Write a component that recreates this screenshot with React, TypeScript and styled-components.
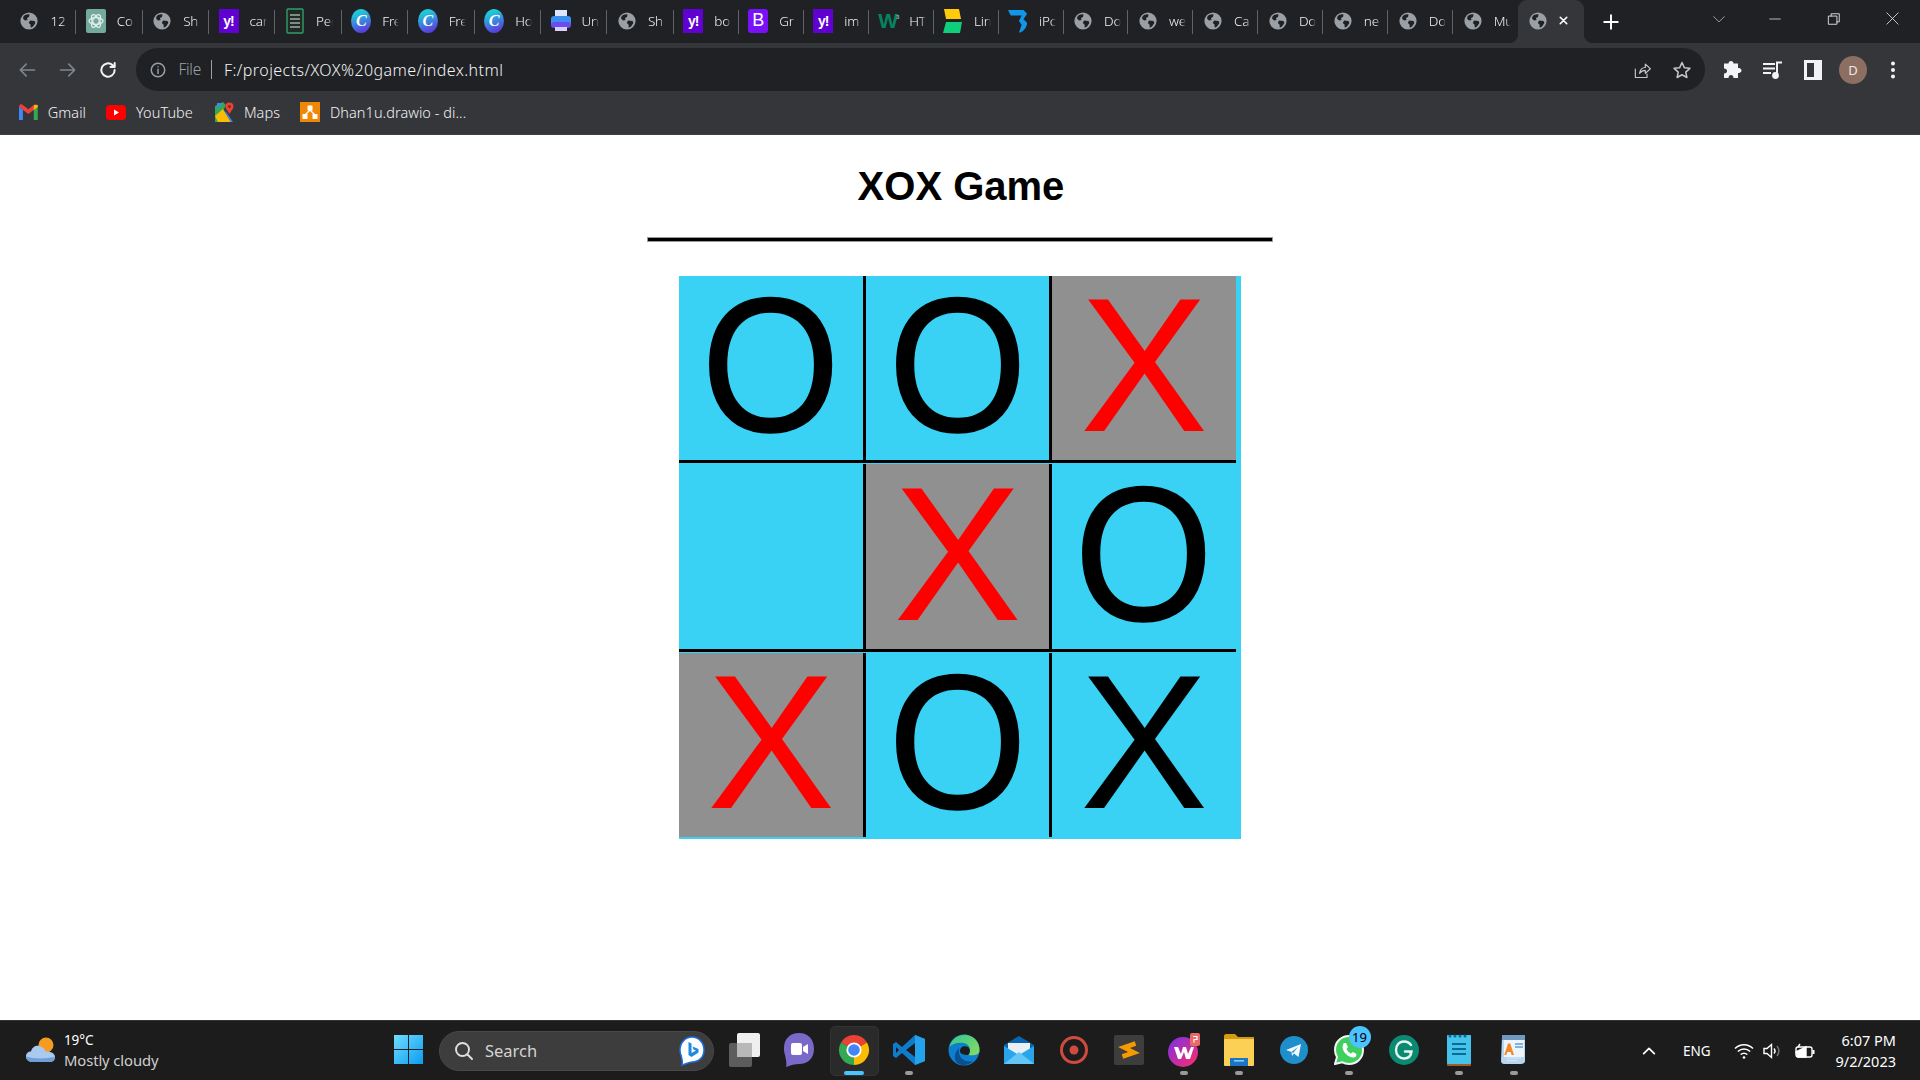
import React from "react";
import styled, { createGlobalStyle } from "styled-components";

const GlobalStyle = createGlobalStyle`
  html, body { margin: 0; padding: 0; height: 100%; background: #fff; overflow: hidden; }
  #root { height: 100%; }
`;

const UI = `"Noto Sans", "Open Sans", "Liberation Sans", sans-serif`;

const Page = styled.div`
  width: 1920px;
  height: 1080px;
  display: flex;
  flex-direction: column;
  font-family: ${UI};
  overflow: hidden;
`;

/* ---------- Tab strip ---------- */
const TabStrip = styled.div`
  height: 43px;
  flex: none;
  background: #202124;
  display: flex;
  padding-left: 9.9px;
`;
const Tab = styled.div<{ $w: number }>`
  width: ${(p) => p.$w}px;
  height: 43px;
  flex: none;
  display: flex;
  align-items: center;
  padding: 0 0 2px 9.5px;
  box-sizing: border-box;
  position: relative;
  gap: 11px;
`;
const FavSlot = styled.span`
  width: 20px;
  flex: none;
  display: flex;
  align-items: center;
  justify-content: center;
`;
const TabDivider = styled.span`
  position: absolute;
  right: 0;
  top: 10px;
  width: 1px;
  height: 24px;
  background: #5f6368;
`;
const TabTitle = styled.span`
  width: 17px;
  overflow: hidden;
  white-space: nowrap;
  font-size: 13.5px;
  font-weight: 300;
  letter-spacing: -0.2px;
  color: #f1f3f4;
  -webkit-mask-image: linear-gradient(90deg, #000 70%, transparent);
  mask-image: linear-gradient(90deg, #000 70%, transparent);
`;
const ActiveTab = styled(Tab)`
  background: #35363a;
  border-radius: 9px 9px 0 0;
  gap: 9px;
  &::before, &::after {
    content: "";
    position: absolute;
    bottom: 0;
    width: 9px;
    height: 9px;
  }
  &::before { left: -9px; background: radial-gradient(circle at 0 0, transparent 9px, #35363a 9.5px); }
  &::after { right: -9px; background: radial-gradient(circle at 100% 0, transparent 9px, #35363a 9.5px); }
`;
const NewTabButton = styled.div`
  width: 32px;
  height: 43px;
  margin-left: 11px;
  display: flex;
  align-items: center;
  justify-content: center;
  flex: none;
`;
const WindowControls = styled.div`
  margin-left: auto;
  display: flex;
  height: 37px;
`;
const WindowButton = styled.div<{ $w?: number }>`
  width: ${(p) => p.$w ?? 58}px;
  display: flex;
  align-items: center;
  justify-content: center;
`;

/* ---------- Toolbar ---------- */
const Toolbar = styled.div`
  height: 48px;
  flex: none;
  background: #35363a;
  display: flex;
  align-items: flex-end;
  padding: 0 7px;
  box-sizing: border-box;
`;
const ToolbarSide = styled.div`
  height: 43px;
  display: flex;
  align-items: center;
  flex: none;
`;
const NavButton = styled.div`
  width: 40.5px;
  height: 40px;
  display: flex;
  align-items: center;
  justify-content: center;
`;
const Omnibox = styled.div`
  flex: 1;
  height: 43px;
  margin: 0 8px 0 7px;
  border-radius: 22px;
  background: #202124;
  display: flex;
  align-items: center;
  padding: 0 3px 0 13px;
`;
const SiteChip = styled.span`
  font-size: 15.500px;
  font-weight: 300;
  color: #9aa0a6;
  margin-left: 12px;
  padding-right: 10px;
  border-right: 1px solid #9aa0a6;
  line-height: 19px;
  letter-spacing: -0.3px;
`;
const UrlText = styled.span`
  margin-left: 12px;
  font-size: 16px;
  font-weight: 300;
  color: #f1f3f4;
  letter-spacing: 0.44px;
`;
const OmniActions = styled.div`
  margin-left: auto;
  display: flex;
`;
const ActionButton = styled.div`
  width: 40px;
  height: 40px;
  display: flex;
  align-items: center;
  justify-content: center;
`;
const Avatar = styled.div`
  width: 28px;
  height: 28px;
  border-radius: 50%;
  background: #8d6e63;
  color: #f1e6e1;
  font-size: 13px;
  display: flex;
  align-items: center;
  justify-content: center;
`;

/* ---------- Bookmarks ---------- */
const BookmarksBar = styled.div`
  height: 44px;
  flex: none;
  background: #35363a;
  display: flex;
  align-items: center;
  padding: 0 0 1px 19px;
  box-sizing: border-box;
  gap: 20px;
  border-bottom: 1px solid #3f4044;
`;
const Bookmark = styled.div<{ $w: number }>`
  display: flex;
  align-items: center;
  gap: 10px;
  width: ${(p) => p.$w}px;
  font-size: 14.500px;
  font-weight: 300;
  letter-spacing: 0.05px;
  color: #f1f3f4;
  white-space: nowrap;
`;

/* ---------- Game ---------- */
const Main = styled.main`
  flex: 1;
  background: #fff;
  display: flex;
  flex-direction: column;
  align-items: center;
  font-family: "Liberation Sans", Arial, sans-serif;
`;
const Title = styled.h1`
  margin: 29px 0 28px;
  padding-left: 2px;
  font-size: 40px;
  line-height: 45px;
  font-weight: 700;
  color: #000;
`;
const Rule = styled.hr`
  width: 626px;
  height: 5px;
  margin: 0 0 34px;
  box-sizing: border-box;
  border: 1px solid #9a9a9a;
  background: #000;
`;
const Board = styled.div`
  width: 562px;
  height: 563px;
  background: #39d2f4;
  display: grid;
  grid-template-columns: 187px 186px 184px;
  grid-template-rows: 187px 188px 184px;
  row-gap: 1px;
  align-content: start;
  justify-content: start;
`;
const Cell = styled.div<{ $hit?: boolean; $red?: boolean; $col: number; $row: number }>`
  box-sizing: border-box;
  background: ${(p) => (p.$hit ? "#909090" : "transparent")};
  color: ${(p) => (p.$red ? "#ff0000" : "#000")};
  border-right: ${(p) => (p.$col < 2 ? "3px solid #000" : "0")};
  border-bottom: ${(p) => (p.$row < 2 ? "3px solid #000" : "0")};
  font-size: 192px;
  line-height: 1;
  padding-bottom: 6px;
  display: flex;
  align-items: center;
  justify-content: center;
  overflow: hidden;
`;
const Ring = styled.span`
  display: inline-block;
  transform: scaleX(0.93);
  -webkit-text-stroke: 1.4px #000;
`;

/* ---------- Taskbar ---------- */
const Taskbar = styled.div`
  height: 60px;
  flex: none;
  box-sizing: border-box;
  background: #1c1c1c;
  border-top: 1px solid #333;
  display: flex;
  align-items: center;
  font-family: ${UI};
  color: #fff;
`;
const Weather = styled.div`
  width: 380.5px;
  flex: none;
  box-sizing: border-box;
  padding: 0 0 2px 26px;
  display: flex;
  align-items: center;
  gap: 8px;
`;
const WeatherText = styled.div`
  font-size: 14.800px;
  line-height: 20px;
  color: #cfcfcf;
  letter-spacing: -0.1px;
`;
const WeatherTemp = styled.div`
  font-size: 13.500px;
  color: #fff;
`;
const TaskIcon = styled.div<{ $active?: boolean }>`
  width: 55px;
  height: 50px;
  flex: none;
  box-sizing: border-box;
  padding-bottom: 2px;
  position: relative;
  display: flex;
  align-items: center;
  justify-content: center;
  &::before {
    content: "";
    display: ${(p) => (p.$active ? "block" : "none")};
    position: absolute;
    inset: 0 3px;
    border-radius: 5px;
    background: #2a2a2a;
    border: 1px solid #333;
  }
  & > svg { position: relative; }
`;
const RunDot = styled.span<{ $active?: boolean }>`
  position: absolute;
  bottom: 1px;
  left: 50%;
  transform: translateX(-50%);
  width: ${(p) => (p.$active ? 20 : 8)}px;
  height: 4px;
  border-radius: 2px;
  background: ${(p) => (p.$active ? "#4cc2ff" : "#9a9a9a")};
`;
const Badge = styled.span`
  position: absolute;
  top: 0;
  right: 6px;
  width: 22px;
  height: 22px;
  border-radius: 50%;
  background: #4cc2ff;
  color: #000;
  font-size: 13px;
  display: flex;
  align-items: center;
  justify-content: center;
`;
const SearchBox = styled.div`
  width: 275px;
  height: 40px;
  flex: none;
  margin: 0 2.5px 0 3.5px;
  box-sizing: border-box;
  border-radius: 20px;
  background: #3d3d3d;
  border: 1px solid #484848;
  display: flex;
  align-items: center;
  padding: 0 8px 0 14px;
  gap: 11px;
  font-size: 16.500px;
  color: #d4d4d4;
`;
const BingMark = styled.span`
  margin-left: auto;
  display: flex;
`;
const Tray = styled.div`
  width: 279px;
  margin-left: auto;
  flex: none;
  box-sizing: border-box;
  padding-right: 24px;
  display: flex;
  align-items: center;
`;
const TrayIcon = styled.span<{ $gap: number }>`
  display: flex;
  margin-left: ${(p) => p.$gap}px;
`;
const TrayLabel = styled.span`
  margin-left: 26px;
  font-size: 13.500px;
  color: #fff;
`;
const Clock = styled.div`
  margin-left: auto;
  text-align: right;
  font-size: 14.500px;
  line-height: 21px;
  color: #fff;
`;

/* ---------- Favicons ---------- */
const Globe = () => (
  <svg width="18" height="18" viewBox="0 0 18 18">
    <circle cx="9" cy="9" r="8.6" fill="#9aa0a6" />
    <path d="M3.5 4.5 C5 2.5 8 2 9.5 2.6 L9 5 L7 6 L7.5 8 L5 8.5 L3 6.5Z M10 8.5 L14.5 9 L15.4 11 L13 14.5 L10.8 15.8 L10.5 12.5 L8.8 11Z" fill="#202124" />
  </svg>
);
const GptIcon = () => (
  <svg width="20" height="24" viewBox="0 0 20 24">
    <rect width="20" height="24" rx="2" fill="#74aa9c" />
    <g fill="none" stroke="#dfeee9" strokeWidth="1.3">
      <ellipse cx="10" cy="12" rx="7" ry="3.3" />
      <ellipse cx="10" cy="12" rx="7" ry="3.3" transform="rotate(60 10 12)" />
      <ellipse cx="10" cy="12" rx="7" ry="3.3" transform="rotate(120 10 12)" />
    </g>
  </svg>
);
const YahooBox = styled.span`
  width: 20px;
  height: 24px;
  flex: none;
  background: #6001d2;
  color: #fff;
  font: 700 14px "Liberation Sans", sans-serif;
  letter-spacing: -1px;
  display: flex;
  align-items: center;
  justify-content: center;
`;
const SheetIcon = () => (
  <svg width="18" height="26" viewBox="0 0 18 26">
    <rect x="1" y="1" width="16" height="24" rx="1" fill="#1f2a24" stroke="#2f9e6a" strokeWidth="1.4" />
    <path d="M4 7h10M4 11h10M4 15h10M4 19h10" stroke="#7f8b85" strokeWidth="2" />
  </svg>
);
const CanvaBox = styled.span`
  width: 20px;
  height: 24px;
  flex: none;
  border-radius: 50%;
  background: linear-gradient(160deg, #1ec8d8 20%, #5a3fe0 85%);
  color: #fff;
  font: italic 700 16px "Liberation Serif", serif;
  display: flex;
  align-items: center;
  justify-content: center;
`;
const PrinterIcon = () => (
  <svg width="20" height="24" viewBox="0 0 20 24">
    <rect x="4" y="1" width="12" height="7" fill="#d9e8ff" />
    <rect x="0" y="7" width="20" height="11" rx="3" fill="#3d8ef0" />
    <rect x="0" y="13" width="20" height="6" rx="3" fill="#6a4cf0" />
    <rect x="4" y="18" width="12" height="4" fill="#dccfff" />
  </svg>
);
const BootstrapBox = styled.span`
  width: 20px;
  height: 24px;
  flex: none;
  border-radius: 3px;
  background: #7a10f7;
  color: #fff;
  font: 400 18px "Liberation Sans", sans-serif;
  display: flex;
  align-items: center;
  justify-content: center;
`;
const W3Text = styled.span`
  width: 20px;
  flex: none;
  color: #04845f;
  font: 700 21px "Liberation Sans", sans-serif;
  letter-spacing: -1px;
  white-space: nowrap;
  & sup { font-size: 6px; color: #aaa; vertical-align: 9px; line-height: 0; margin-left: -1px; }
`;
const LineIcon = () => (
  <svg width="20" height="24" viewBox="0 0 20 24">
    <path d="M1 0H16L18 10H3Z" fill="#fdcb0a" />
    <path d="M3 13H19L17 24H0Z" fill="#0fce7c" />
  </svg>
);
const IpIcon = () => (
  <svg width="22" height="26" viewBox="0 0 22 26">
    <path d="M0 1H17L21 5L17 11L21 15C21 20 17 25 12 26L15 17L12 13L15 7H3Z" fill="#1296e8" />
  </svg>
);

type Fav = "globe" | "gpt" | "yahoo" | "sheet" | "canva" | "print" | "boot" | "w3" | "line" | "ip";
const Favicon = ({ kind }: { kind: Fav }) => {
  switch (kind) {
    case "gpt": return <GptIcon />;
    case "yahoo": return <YahooBox>y!</YahooBox>;
    case "sheet": return <SheetIcon />;
    case "canva": return <CanvaBox>C</CanvaBox>;
    case "print": return <PrinterIcon />;
    case "boot": return <BootstrapBox>B</BootstrapBox>;
    case "w3": return <W3Text>W<sup>3</sup></W3Text>;
    case "line": return <LineIcon />;
    case "ip": return <IpIcon />;
    default: return <Globe />;
  }
};

const tabs: { k: Fav; t: string }[] = [
  { k: "globe", t: "12" }, { k: "gpt", t: "Co" }, { k: "globe", t: "Sh" }, { k: "yahoo", t: "car" },
  { k: "sheet", t: "Per" }, { k: "canva", t: "Fre" }, { k: "canva", t: "Fre" }, { k: "canva", t: "Ho" },
  { k: "print", t: "Un" }, { k: "globe", t: "Sh" }, { k: "yahoo", t: "bo" }, { k: "boot", t: "Gr" },
  { k: "yahoo", t: "im" }, { k: "w3", t: "HT" }, { k: "line", t: "Lin" }, { k: "ip", t: "iPc" },
  { k: "globe", t: "Do" }, { k: "globe", t: "we" }, { k: "globe", t: "Ca" }, { k: "globe", t: "Do" },
  { k: "globe", t: "ne" }, { k: "globe", t: "Do" }, { k: "globe", t: "Mu" },
];

/* ---------- Line icons ---------- */
const Line = ({ d, size = 20, color = "#e8eaed", w = 2, box = 24 }: { d: string; size?: number; color?: string; w?: number; box?: number }) => (
  <svg width={size} height={size} viewBox={`0 0 ${box} ${box}`} fill="none" stroke={color} strokeWidth={w} strokeLinecap="round" strokeLinejoin="round">
    <path d={d} />
  </svg>
);

/* ---------- Bookmark icons ---------- */
const GmailIcon = () => (
  <svg width="19" height="16" viewBox="0 0 19 16">
    <path d="M0 2.5V16H4V6Z" fill="#4285f4" />
    <path d="M19 2.5V16H15V6Z" fill="#34a853" />
    <path d="M0 2.5C0 .5 2 -.5 3.5 .6L9.5 5.2 15.5 .6C17 -.5 19 .5 19 2.5L15 6 9.5 10 4 6Z" fill="#ea4335" />
    <path d="M15 6V1.1L19 .8V3Z" fill="#fbbc04" />
  </svg>
);
const YoutubeIcon = () => (
  <svg width="20" height="15" viewBox="0 0 20 15">
    <rect width="20" height="15" rx="4" fill="#ff0000" />
    <path d="M8 4.5L13 7.5 8 10.5Z" fill="#fff" />
  </svg>
);
const MapsIcon = () => (
  <svg width="19" height="20" viewBox="0 0 19 20">
    <path d="M0 4L8 0 11 3 3 20H0Z" fill="#34a853" />
    <path d="M0 14L8 7 16 20H3Z" fill="#fbbc04" />
    <path d="M8 7L12 11 18 20H16Z" fill="#4285f4" />
    <path d="M2 1H8L2 7Z" fill="#4285f4" />
    <circle cx="14.5" cy="4.5" r="4" fill="#ea4335" />
    <path d="M11.5 7L14.5 12 17.5 7Z" fill="#ea4335" />
    <circle cx="14.5" cy="4.5" r="1.4" fill="#8b1a12" />
  </svg>
);
const DrawioIcon = () => (
  <svg width="20" height="20" viewBox="0 0 20 20">
    <rect width="20" height="20" fill="#f08705" />
    <path d="M10 8L5 13M10 8L15 13" stroke="#fff" strokeWidth="1.4" />
    <rect x="7.5" y="3.5" width="5" height="5" rx=".6" fill="#fff" />
    <rect x="2.5" y="12" width="5" height="5" rx=".6" fill="#fff" />
    <rect x="12.5" y="12" width="5" height="5" rx=".6" fill="#fff" />
  </svg>
);

/* ---------- Taskbar icons ---------- */
const WeatherIcon = () => (
  <svg width="30" height="26" viewBox="0 0 30 26">
    <circle cx="20" cy="8" r="7.5" fill="#f39c1f" />
    <path d="M7 25C3 25 0 23 0 19.5 0 16.5 2 14.5 5 14.5 6 10 10 8 13.5 9 17 10 19 12 19.5 14.5 25 14 29 16.5 29 20 29 23 27 25 23 25Z" fill="#a9c9ee" />
    <path d="M7 25C3 25 0 23 0 19.5 6 22 20 22 29 20 29 23 27 25 23 25Z" fill="#6f9fd8" />
  </svg>
);
const StartIcon = () => (
  <svg width="29" height="29" viewBox="0 0 29 29">
    <defs>
      <linearGradient id="st" x1="0" y1="0" x2="1" y2="1">
        <stop offset="0" stopColor="#6fdcff" />
        <stop offset="1" stopColor="#0b9df0" />
      </linearGradient>
    </defs>
    <path d="M0 0H14V14H0ZM15 0H29V14H15ZM0 15H14V29H0ZM15 15H29V29H15Z" fill="url(#st)" />
  </svg>
);
const SearchGlyph = () => (
  <svg width="20" height="20" viewBox="0 0 20 20" fill="none" stroke="#e0e0e0" strokeWidth="1.9" strokeLinecap="round">
    <circle cx="8.5" cy="8.5" r="6.5" />
    <path d="M13.5 13.5L18 18" />
  </svg>
);
const BingIcon = () => (
  <svg width="26" height="30" viewBox="0 0 26 30">
    <path d="M13 1C20 1 25 7 25 14 25 21 20 26 13 26 10 26 7 28 3 29 4 26 3 23 2 19 1 17 1 15 1 14 1 7 6 1 13 1Z" fill="#fff" stroke="#1b6fe0" strokeWidth="1.5" />
    <path d="M9.5 6L12.5 7.5V17L17 14.5 14.5 13.5 13.5 10.5 19.5 13V16.5L12.5 21 9.5 19Z" fill="#1b8ae0" />
  </svg>
);
const TaskViewIcon = () => (
  <svg width="31" height="34" viewBox="0 0 31 34">
    <rect x="0" y="10" width="23" height="24" rx="2" fill="#5c5c5c" />
    <rect x="8" y="0" width="23" height="24" rx="2" fill="#efefef" />
    <rect x="8" y="10" width="15" height="14" fill="#b8b8b8" />
  </svg>
);
const TeamsIcon = () => (
  <svg width="30" height="34" viewBox="0 0 30 34">
    <path d="M15 0C24 0 30 6 30 16 30 25 24 31 15 31 11 31 7 32 2 34 3 31 2 27 1 22 0 19 0 17 0 15 0 6 6 0 15 0Z" fill="#7b69c9" />
    <rect x="7" y="10" width="11" height="12" rx="2" fill="#fff" />
    <path d="M19 14L24 11V21L19 18Z" fill="#fff" />
  </svg>
);
const ChromeIcon = () => (
  <svg width="32" height="32" viewBox="0 0 32 32">
    <path d="M16 16L3 8.5A15 15 0 0 1 29 8.5Z" fill="#ea4335" />
    <path d="M16 16L29 8.5A15 15 0 0 1 16 31Z" fill="#fbbc04" />
    <path d="M16 16L16 31A15 15 0 0 1 3 8.5Z" fill="#34a853" />
    <circle cx="16" cy="16" r="7.6" fill="#fff" />
    <circle cx="16" cy="16" r="5.8" fill="#4285f4" />
  </svg>
);
const VsCodeIcon = () => (
  <svg width="32" height="32" viewBox="0 0 32 32">
    <path d="M22 1L32 5V27L22 31 9 19 3 24 0 22V10L3 8 9 13Z" fill="#0e7ccb" />
    <path d="M22 1L32 5V27L22 31Z" fill="#22a3ec" />
    <path d="M22 9V23L13 16Z" fill="#1c1c1c" />
    <path d="M3 13V19L6 16Z" fill="#1c1c1c" />
  </svg>
);
const EdgeIcon = () => (
  <svg width="32" height="32" viewBox="0 0 32 32">
    <defs>
      <linearGradient id="eg" x1="0" y1="0" x2="1" y2="1">
        <stop offset="0" stopColor="#36c58e" />
        <stop offset="1" stopColor="#8bdc5e" />
      </linearGradient>
    </defs>
    <circle cx="16" cy="16" r="15.5" fill="#0c7fcf" />
    <path d="M1.5 13C4 3 13 0 19 1 27 2.5 32 9 31.5 17 31 21 26 22 20 21 24 17 22 10 16 9 9 8 4 10 1.5 13Z" fill="url(#eg)" />
    <path d="M11 18C11 24 17 29 25 27 21 31 15 32 11 30 5 27 6 19 11 14 10.500 15 11 17 11 18Z" fill="#0a4f8f" />
    <path d="M12 17C12 13 16 11 20 13 23 15 22 20 20 21 16 21 12 20 12 17Z" fill="#1c1c1c" />
  </svg>
);
const MailIcon = () => (
  <svg width="30" height="28" viewBox="0 0 30 28">
    <path d="M0 9L15 0 30 9V11L15 20 0 11Z" fill="#0a63ad" />
    <path d="M4 7H26V15L15 21 4 15Z" fill="#e8eff5" />
    <path d="M0 10L15 19 30 10V28H0Z" fill="#2aa5ec" />
    <path d="M0 28L15 16 30 28Z" fill="#62c7f6" />
  </svg>
);
const RecordIcon = () => (
  <svg width="30" height="30" viewBox="0 0 30 30">
    <circle cx="15" cy="15" r="12.500" fill="none" stroke="#cf4b3f" strokeWidth="3" />
    <circle cx="15" cy="15" r="4.500" fill="#cf4b3f" />
  </svg>
);
const SublimeIcon = () => (
  <svg width="30" height="30" viewBox="0 0 30 30">
    <rect width="30" height="30" rx="2" fill="#3d3d3d" />
    <path d="M21.500 8.500L10 12.500 20 17.500 8.500 21.500" fill="none" stroke="#f59b00" strokeWidth="4.600" />
  </svg>
);
const WpsIcon = () => (
  <svg width="32" height="34" viewBox="0 0 32 34">
    <defs>
      <linearGradient id="wp" x1="0" y1="0" x2="1" y2="1">
        <stop offset="0" stopColor="#7a30e8" />
        <stop offset="1" stopColor="#ff2d6a" />
      </linearGradient>
    </defs>
    <circle cx="15" cy="19" r="15" fill="url(#wp)" />
    <path d="M6 14H10L13 21 15 14H18L20 21 23 14H26L22 26H18L16 19 13 26H10Z" fill="#fff" />
    <rect x="22" y="0" width="10" height="13" rx="2" fill="#e86a6a" />
    <path d="M25 3.500H29V6.500H26V9.500" fill="none" stroke="#fff" strokeWidth="1.200" />
  </svg>
);
const FolderIcon = () => (
  <svg width="30" height="32" viewBox="0 0 30 32">
    <path d="M0 2C0 1 1 0 2 0H11L14 3H30V8H0Z" fill="#d39a12" />
    <rect y="5" width="30" height="27" rx="1" fill="#fcd054" />
    <rect x="6" y="24" width="18" height="8" fill="#1a76c4" />
    <rect x="10" y="26" width="10" height="1.600" fill="#8cc8f2" />
  </svg>
);
const TelegramIcon = () => (
  <svg width="28" height="28" viewBox="0 0 28 28">
    <circle cx="14" cy="14" r="14" fill="#1e8fcb" />
    <path d="M6 14L21 8 18.500 21 14 17.500 12 20 11.500 16Z" fill="#f3f9fd" />
    <path d="M11.500 16L18 11 13 17Z" fill="#1e8fcb" />
  </svg>
);
const WhatsappIcon = () => (
  <svg width="30" height="30" viewBox="0 0 30 30">
    <path d="M15 1C23 1 29 7 29 15 29 23 23 29 15 29 12.500 29 10 28.300 8 27.200L1 29 3 22C1.800 20 1 17.500 1 15 1 7 7 1 15 1Z" fill="#3fcf5f" stroke="#f4f4f4" strokeWidth="2" />
    <path d="M10 8L12 8 14 12 12.500 14C13.500 16 15 17.500 17 18.500L19 17 22.500 19 22 21.500C20 23.500 15 22.500 12 19 8.500 15.500 7.500 10.500 10 8Z" fill="#fff" />
  </svg>
);
const GrammarlyIcon = () => (
  <svg width="30" height="30" viewBox="0 0 30 30">
    <circle cx="15" cy="15" r="15" fill="#0b8a72" />
    <path d="M22 10C20 7 17.500 6.500 15 6.500 10 6.500 7 10.500 7 15 7 20 10.500 23.500 15 23.500 19 23.500 22 21 22.500 16.500H16" fill="none" stroke="#e6f4f0" strokeWidth="2.400" strokeLinecap="round" />
    <path d="M22.800 20.500L22.800 16 18 16Z" fill="#e6f4f0" />
  </svg>
);
const NotepadIcon = () => (
  <svg width="24" height="32" viewBox="0 0 24 32">
    <rect y="1" width="24" height="31" rx="1" fill="#a85a24" />
    <rect y="1" width="24" height="29" rx="1" fill="#44c3ec" />
    <path d="M5 10H19M5 15H19M5 20H19" stroke="#0b6a92" strokeWidth="2.200" />
    <path d="M3 2h.01M8 2h.01M13 2h.01M18 2h.01" stroke="#0b6a92" strokeWidth="3" strokeLinecap="round" />
  </svg>
);
const WordpadIcon = () => (
  <svg width="26" height="30" viewBox="0 0 26 30">
    <path d="M1 2H24V26C24 28 22 29 20 29H3C1 29 0 27 0 26Z" fill="#b7d6f2" />
    <rect x="1" y="0" width="23" height="5" fill="#7198c0" />
    <rect x="3" y="5" width="20" height="17" fill="#eef4fb" />
    <path d="M13 20H10.600L9.700 17H6.300L5.400 20H3.300L7 8.500H9.300Z" fill="#f08a24" />
    <path d="M14 9H22M14 12H22" stroke="#5c9ad6" strokeWidth="1.600" />
    <path d="M6 23H20M6 25.500H16" stroke="#dbe6f1" strokeWidth="1" />
  </svg>
);

const taskIcons: { el: React.ReactNode; dot?: boolean; active?: boolean; badge?: string }[] = [
  { el: <TaskViewIcon /> },
  { el: <TeamsIcon /> },
  { el: <ChromeIcon />, dot: true, active: true },
  { el: <VsCodeIcon />, dot: true },
  { el: <EdgeIcon /> },
  { el: <MailIcon /> },
  { el: <RecordIcon /> },
  { el: <SublimeIcon /> },
  { el: <WpsIcon />, dot: true },
  { el: <FolderIcon />, dot: true },
  { el: <TelegramIcon /> },
  { el: <WhatsappIcon />, dot: true, badge: "19" },
  { el: <GrammarlyIcon /> },
  { el: <NotepadIcon />, dot: true },
  { el: <WordpadIcon />, dot: true },
];

const board: { v: string; hit?: boolean; red?: boolean }[] = [
  { v: "O" }, { v: "O" }, { v: "X", hit: true, red: true },
  { v: "" }, { v: "X", hit: true, red: true }, { v: "O" },
  { v: "X", hit: true, red: true }, { v: "O" }, { v: "X" },
];

export default function App() {
  return (
    <Page>
      <GlobalStyle />
      <TabStrip>
        {tabs.map((t, i) => (
          <Tab key={i} $w={i < 10 ? 66.4 : 64.96}>
            <FavSlot><Favicon kind={t.k} /></FavSlot>
            <TabTitle>{t.t}</TabTitle>
            {i < tabs.length - 1 && <TabDivider />}
          </Tab>
        ))}
        <ActiveTab $w={66}>
          <FavSlot><Globe /></FavSlot>
          <Line d="M6 6L18 18M18 6L6 18" size={13} w={3} color="#fff" />
        </ActiveTab>
        <NewTabButton>
          <Line d="M12 3V21M3 12H21" size={18} w={2.600} color="#fff" />
        </NewTabButton>
        <WindowControls>
          <WindowButton $w={54}><Line d="M3 8L12 17 21 8" size={14} w={1.300} color="#c4c7c5" /></WindowButton>
          <WindowButton><Line d="M3 12H21" size={14} w={1.300} color="#e8eaed" /></WindowButton>
          <WindowButton $w={60}>
            <Line d="M3 7H17V21H3ZM7 7V3H21V17H17" size={14} w={1.500} color="#e8eaed" />
          </WindowButton>
          <WindowButton $w={56}><Line d="M3 3L21 21M21 3L3 21" size={15} w={1.300} color="#e8eaed" /></WindowButton>
        </WindowControls>
      </TabStrip>

      <Toolbar>
        <ToolbarSide>
          <NavButton><Line d="M21 12H4M11 5L4 12 11 19" color="#80868b" size={20} /></NavButton>
          <NavButton><Line d="M3 12H20M13 5L20 12 13 19" color="#80868b" size={20} /></NavButton>
          <NavButton><Line d="M20 12A8 8 0 1 1 17.500 6.200L20 8.500M20 3.500V8.500H15" color="#f1f3f4" size={20} w={2.400} /></NavButton>
        </ToolbarSide>
        <Omnibox>
          <Line d="M12 3A9 9 0 1 0 12 21 9 9 0 0 0 12 3ZM12 11V16.500M12 7.600V7.700" color="#9aa0a6" size={18} />
          <SiteChip>File</SiteChip>
          <UrlText>F:/projects/XOX%20game/index.html</UrlText>
          <OmniActions>
            <ActionButton><Line d="M4 11V21H18V17M9 16C10 11 13 9 16 9V5L22 10.500 16 16V12.500C13 12.500 11 13.500 9 16Z" color="#c4c7c5" size={20} w={1.400} /></ActionButton>
            <ActionButton><Line d="M12 3L14.800 9.200 21.500 10 16.500 14.500 17.900 21 12 17.700 6.100 21 7.500 14.500 2.500 10 9.200 9.200Z" color="#c4c7c5" size={20} w={1.800} /></ActionButton>
          </OmniActions>
        </Omnibox>
        <ToolbarSide>
          <ActionButton>
            <svg width="20" height="20" viewBox="0 0 20 20" fill="#f1f3f4"><path d="M8 1C9.500 1 10.500 2 10.500 3.500H15V8C16.500 8 18.500 8.500 18.500 10.500 18.500 12.500 16.500 13 15 13V18H10.500C10.500 16 9.500 15 8 15 6.500 15 5.500 16 5.500 18H1V13.500C3 13.500 4 12.500 4 11 4 9.500 3 8.500 1 8.500V3.500H5.500C5.500 2 6.500 1 8 1Z" /></svg>
          </ActionButton>
          <ActionButton>
            <svg width="20" height="18" viewBox="0 0 20 18" fill="none" stroke="#f1f3f4" strokeWidth="1.800"><path d="M0 3H12M0 7.500H12M0 12H8" /><path d="M14 13.500V1.500H19" strokeWidth="2" /><circle cx="12.500" cy="14.500" r="2.500" fill="#f1f3f4" /></svg>
          </ActionButton>
          <ActionButton>
            <svg width="18" height="20" viewBox="0 0 18 20"><path d="M0 0H18V20H0ZM3 3V17H10V3Z" fill="#f1f3f4" fillRule="evenodd" /></svg>
          </ActionButton>
          <ActionButton><Avatar>D</Avatar></ActionButton>
          <ActionButton>
            <svg width="6" height="18" viewBox="0 0 6 18" fill="#f1f3f4"><circle cx="3" cy="2.500" r="2" /><circle cx="3" cy="9" r="2" /><circle cx="3" cy="15.500" r="2" /></svg>
          </ActionButton>
        </ToolbarSide>
      </Toolbar>

      <BookmarksBar>
        <Bookmark $w={67}><GmailIcon />Gmail</Bookmark>
        <Bookmark $w={89}><YoutubeIcon />YouTube</Bookmark>
        <Bookmark $w={65}><MapsIcon />Maps</Bookmark>
        <Bookmark $w={170}><DrawioIcon />Dhan1u.drawio - di...</Bookmark>
      </BookmarksBar>

      <Main>
        <Title>XOX Game</Title>
        <Rule />
        <Board>
          {board.map((c, i) => (
            <Cell key={i} $hit={c.hit} $red={c.red} $col={i % 3} $row={Math.floor(i / 3)}>
              {c.v === "O" ? <Ring>O</Ring> : c.v}
            </Cell>
          ))}
        </Board>
      </Main>

      <Taskbar>
        <Weather>
          <WeatherIcon />
          <WeatherText>
            <WeatherTemp>19°C</WeatherTemp>
            Mostly cloudy
          </WeatherText>
        </Weather>
        <TaskIcon><StartIcon /></TaskIcon>
        <SearchBox>
          <SearchGlyph />
          Search
          <BingMark><BingIcon /></BingMark>
        </SearchBox>
        {taskIcons.map((t, i) => (
          <TaskIcon key={i} $active={t.active}>
            {t.el}
            {t.badge && <Badge>{t.badge}</Badge>}
            {t.dot && <RunDot $active={t.active} />}
          </TaskIcon>
        ))}
        <Tray>
          <TrayIcon $gap={0}><Line d="M4 16L12 8 20 16" size={16} w={2.600} color="#fff" /></TrayIcon>
          <TrayLabel>ENG</TrayLabel>
          <TrayIcon $gap={23}>
            <svg width="20" height="18" viewBox="0 0 20 18" fill="none" stroke="#fff" strokeWidth="1.500"><path d="M1 6.500C6 1.500 14 1.500 19 6.500M3.800 9.500C7.500 6 12.500 6 16.200 9.500M6.600 12.500C8.500 11 11.500 11 13.400 12.500" /><circle cx="10" cy="15.500" r="1.300" fill="#fff" stroke="none" /></svg>
          </TrayIcon>
          <TrayIcon $gap={9}>
            <svg width="20" height="18" viewBox="0 0 20 18" fill="none" stroke="#fff" strokeWidth="1.400"><path d="M1 6.500V11.500H4L8.500 15.500V2.500L4 6.500Z" /><path d="M11 6.500C12.300 8 12.300 10 11 11.500" /><path d="M14 4C16.300 7 16.300 11 14 14" stroke="#777" /></svg>
          </TrayIcon>
          <TrayIcon $gap={12}>
            <svg width="20" height="16" viewBox="0 0 20 16" fill="none" stroke="#fff" strokeWidth="1.400"><rect x="1" y="4" width="16" height="10" rx="2" /><path d="M1 9L11 4V14H3Z" fill="#fff" /><path d="M18.500 7V11" strokeWidth="2" /><path d="M5 1L3 4" /></svg>
          </TrayIcon>
          <Clock>6:07 PM<br />9/2/2023</Clock>
        </Tray>
      </Taskbar>
    </Page>
  );
}
